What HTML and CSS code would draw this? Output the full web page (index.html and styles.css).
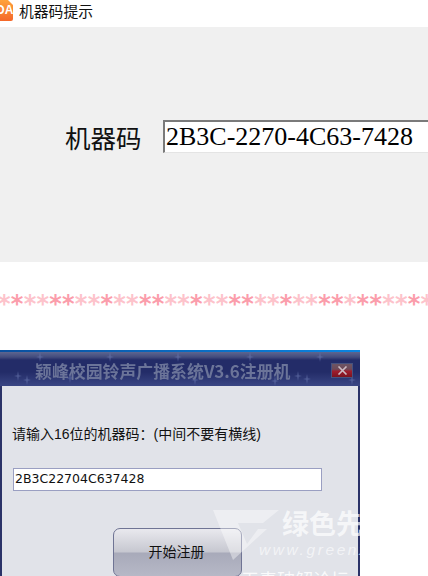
FILE: index.html
```html
<!DOCTYPE html>
<html lang="zh-CN">
<head>
    <meta charset="UTF-8">
    <title>机器码提示</title>
    <link rel="stylesheet" href="styles.css">
</head>
<body>
    <div class="titlebar">
        <div class="app-icon">DA</div>
        <span class="titlebar-text">机器码提示</span>
    </div>
    <div class="code-panel">
        <span class="code-label">机器码</span>
        <div class="code-input">2B3C-2270-4C63-7428</div>
    </div>
    <div class="stars"><b class="lt">*</b><b class="dk">*</b><b class="lt">**</b><b class="dk">**</b><b class="lt">**</b><b class="dk">*</b><b class="lt">**</b><b class="dk">**</b><b class="lt">**</b><b class="dk">*</b><b class="lt">**</b><b class="dk">**</b><b class="lt">**</b><b class="dk">*</b><b class="lt">**</b><b class="dk">**</b><b class="lt">*</b><b class="dk">**</b><b class="lt">**</b><b class="dk">*</b><b class="lt">*</b></div>
    <div class="dialog">
        <div class="dialog-head">
            <svg class="sparkles" width="360" height="34" viewBox="0 0 360 34">
                <defs><path id="sp" d="M0-5L.8-.8 4 0 .8 .8 0 5-.8 .8-4 0-.8-.8z"/></defs>
                <g fill="#6f7db4" opacity=".5">
                    <use href="#sp" x="18" y="24"/>
                    <use href="#sp" x="27" y="28"/>
                    <use href="#sp" x="40" y="5"/>
                    <use href="#sp" x="70" y="26"/>
                    <use href="#sp" x="110" y="5"/>
                    <use href="#sp" x="178" y="5"/>
                    <use href="#sp" x="195" y="28"/>
                    <use href="#sp" x="250" y="5"/>
                    <use href="#sp" x="275" y="29"/>
                    <use href="#sp" x="298" y="24"/>
                    <use href="#sp" x="307" y="27"/>
                    <use href="#sp" x="320" y="5"/>
                    <use href="#sp" x="352" y="28"/>
                </g>
            </svg>
            <span class="dialog-title">颖峰校园铃声广播系统V3.6注册机</span>
            <div class="close-btn">
                <svg width="11" height="9" viewBox="0 0 11 9"><path d="M1.5 .5l8 8M9.5 .5l-8 8" stroke="#cdbcc4" stroke-width="1.6" fill="none"/></svg>
            </div>
        </div>
        <div class="dialog-body">
            <p class="prompt">请输入16位的机器码：(中间不要有横线)</p>
            <div class="serial-input">2B3C22704C637428</div>
            <div class="reg-btn">开始注册</div>
        </div>
        <div class="watermark">
            <svg class="wm-logo" width="67" height="50" viewBox="0 0 67 50"><path d="M0 0H66L50 13H25L34 34 45 19H54L20 50z" fill="#fff" opacity=".4"/></svg>
            <div class="wm-text">
                <div class="wm-name">绿色先锋</div>
                <div class="wm-url">www.greenxf.com</div>
            </div>
        </div>
        <div class="wm-foot">无毒破解论坛</div>
    </div>
</body>
</html>
```

FILE: styles.css
```css
html, body {
    height: 576px;
    overflow: hidden;
}
body {
    margin: 0;
    background-color: #fff;
    font-family: "Liberation Sans", "Noto Sans CJK SC", sans-serif;
    color: #111;
}
.titlebar {
    height: 27px;
    display: flex;
    align-items: flex-start;
    gap: 6px;
    overflow: hidden;
}
.app-icon {
    position: relative;
    width: 13px;
    height: 21px;
    flex: none;
    background: linear-gradient(#ffa23c, #f4682a);
    border-radius: 0 0 2px 0;
    color: #fff;
    font-size: 12px;
    font-weight: bold;
    line-height: 21px;
    white-space: nowrap;
    overflow: hidden;
    text-indent: -4px;
}
.app-icon::after {
    content: "";
    position: absolute;
    top: 0;
    right: 0;
    border-top: 5px solid #fff;
    border-left: 5px solid transparent;
}
.titlebar-text {
    font-size: 14.8px;
    line-height: 24px;
}
.code-panel {
    height: 235px;
    background-color: #f0f0f0;
    display: flex;
    align-items: flex-start;
    padding: 93px 0 0 65px;
    box-sizing: border-box;
}
.code-label {
    font-size: 25.5px;
    line-height: 38px;
    width: 98px;
    flex: none;
    color: #111;
}
.code-input {
    width: 270px;
    flex: none;
    height: 33px;
    box-sizing: border-box;
    background-color: #fff;
    border-top: 2px solid #7a7a7a;
    border-left: 2px solid #7a7a7a;
    border-bottom: 1px solid #e4e4e4;
    padding-left: 1px;
    font-family: "Liberation Serif", serif;
    font-size: 26px;
    line-height: 30px;
    color: #000;
    white-space: nowrap;
}
.stars {
    margin: 25px 0 0 -2px;
    height: 34px;
    font-family: "DejaVu Sans", sans-serif;
    font-size: 24px;
    font-weight: bold;
    letter-spacing: .25px;
    line-height: 34px;
    white-space: nowrap;
    overflow: hidden;
}
.stars .lt { color: #fdc3cb; }
.stars .dk { color: #fb9dab; }
.dialog {
    position: relative;
    width: 360px;
    height: 240px;
    margin-top: 29px;
    overflow: hidden;
    border-top: 2px solid;
    border-image: linear-gradient(90deg, #0a4f9e, #0a84e0) 1;
    box-sizing: border-box;
    background-color: #2b3368;
}
.dialog-head {
    position: relative;
    height: 34px;
    box-sizing: border-box;
    display: flex;
    align-items: center;
    justify-content: space-between;
    padding: 3px 8px 0 35px;
    background: linear-gradient(#5d6690 0, #434c7e 5px, #232c68 8px, #232c68 20px, #3a4684 34px);
}
.sparkles {
    position: absolute;
    left: 0;
    top: 0;
}
.dialog-title {
    position: relative;
    font-family: "Noto Sans CJK SC", sans-serif;
    font-size: 16.9px;
    font-weight: bold;
    color: #6b7499;
    white-space: nowrap;
    filter: blur(.3px);
}
.close-btn {
    position: relative;
    width: 20px;
    height: 13px;
    margin-top: -1px;
    display: flex;
    align-items: center;
    justify-content: center;
    background: linear-gradient(#6d5564, #6d4a58 40%, #a01c2c 55%, #7a1420);
    outline: 1px solid #47527f;
}
.dialog-body {
    margin: 0 2px;
    height: 204px;
    background-color: #e1e3e9;
    padding: 38px 0 0 10px;
    box-sizing: border-box;
}
.prompt {
    margin: 0;
    font-size: 14px;
    line-height: 20px;
    white-space: nowrap;
}
.serial-input {
    width: 309px;
    height: 23px;
    margin: 24px 0 0 1px;
    box-sizing: border-box;
    background-color: #fff;
    border: 1px solid #9a9fc2;
    padding-left: 1px;
    font-family: "DejaVu Sans", sans-serif;
    font-size: 12.5px;
    line-height: 20px;
}
.reg-btn {
    width: 129px;
    height: 49px;
    margin: 37px 0 0 101px;
    box-sizing: border-box;
    border: 1px solid #6f7494;
    border-radius: 7px;
    background: linear-gradient(#e9e9ee, #c6c7d0 49%, #a8aaba 51%, #b6b8c6);
    text-align: center;
    font-size: 14px;
    line-height: 47px;
    padding-right: 2px;
}
.watermark {
    position: absolute;
    left: 213px;
    top: 158px;
    display: flex;
    gap: 2px;
}
.wm-text { white-space: nowrap; }
.wm-name {
    font-size: 27px;
    font-weight: bold;
    line-height: 30px;
    color: rgba(255, 255, 255, .7);
}
.wm-url {
    margin: 1px 0 0 -23px;
    font-size: 15.5px;
    font-style: italic;
    letter-spacing: 2.6px;
    color: rgba(255, 255, 255, .6);
}
.wm-foot {
    position: absolute;
    left: 241px;
    top: 214px;
    font-size: 18px;
    color: rgba(255, 255, 255, .85);
    white-space: nowrap;
}
```
